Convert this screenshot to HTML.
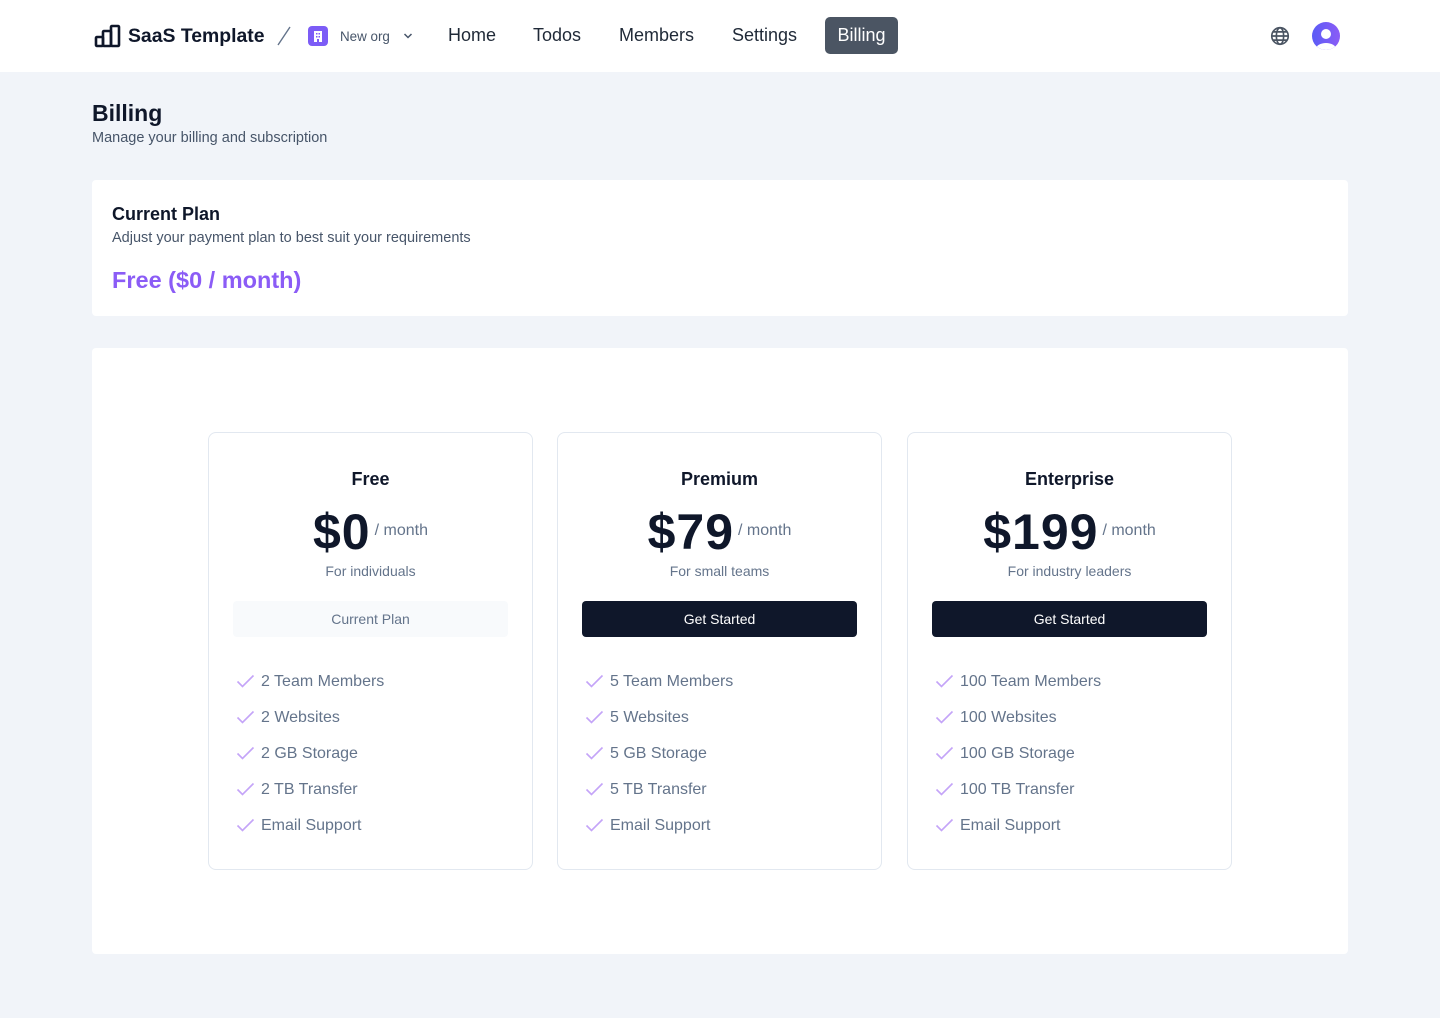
<!DOCTYPE html>
<html><head><meta charset="utf-8"><style>
*{box-sizing:border-box;margin:0;padding:0}
body{width:1440px;height:1018px;background:#f1f4f9;font-family:"Liberation Sans",sans-serif;color:#0f172a;position:relative;overflow:hidden}
.hdr{position:absolute;left:0;top:0;width:1440px;height:72px;background:#fff}
.abs{position:absolute}
.nav{position:absolute;top:25px;font-size:18px;color:#1f2937}
.bill{position:absolute;left:825px;top:17px;width:73px;height:37px;background:#4b5563;color:#fff;border-radius:5px;font-size:18px;text-align:center;line-height:37px}
.box{position:absolute;left:92px;width:1256px;background:#fff;border-radius:4px}
.card{position:absolute;top:432px;width:325px;height:438px;border:1px solid #e2e8f0;border-radius:8px;background:#fff;text-align:center}
.card h3{position:absolute;top:36px;width:100%;font-size:18px;font-weight:bold}
.price{position:absolute;top:70px;width:100%;white-space:nowrap}
.price b{font-size:50px;font-weight:bold;letter-spacing:1px}
.price span{font-size:16px;color:#64748b;vertical-align:14px;margin-left:4px}
.sub{position:absolute;top:130px;width:100%;font-size:14px;color:#64748b}
.btn{position:absolute;left:24px;right:24px;top:168px;height:36px;border-radius:4px;line-height:36px;font-size:14px}
.dark{background:#0f172a;color:#fff}
.light{background:#f8fafc;color:#64748b}
ul{position:absolute;left:27px;top:240px;list-style:none;text-align:left}
li{height:36px;font-size:16px;color:#64748b;display:flex;align-items:flex-start}
li svg{margin-right:6px;margin-top:1px}
</style></head><body>
<div class="hdr">
 <svg class="abs" style="left:94px;top:24px" width="28" height="24" viewBox="0 0 28 24" fill="none" stroke="#0f172a" stroke-width="2.6" stroke-linejoin="round"><rect x="2" y="13" width="7" height="9" rx="1"/><rect x="9" y="7" width="8" height="15" rx="1"/><rect x="17" y="2" width="8" height="20" rx="1"/></svg>
 <div class="abs" style="left:128px;top:25px;font-size:19.4px;font-weight:bold;color:#0f172a">SaaS Template</div>
 <svg class="abs" style="left:276px;top:25px" width="16" height="22"><line x1="14" y1="2" x2="2" y2="20" stroke="#64748b" stroke-width="1.4"/></svg>
 <div class="abs" style="left:308px;top:26px;width:20px;height:20px;background:#7c5cf6;border-radius:4px"><svg width="20" height="20" viewBox="0 0 20 20"><rect x="6" y="5" width="8" height="11" fill="#fff"/><rect x="8" y="7" width="1.5" height="1.5" fill="#7c5cf6"/><rect x="10.5" y="7" width="1.5" height="1.5" fill="#7c5cf6"/><rect x="8" y="10" width="1.5" height="1.5" fill="#7c5cf6"/><rect x="10.5" y="10" width="1.5" height="1.5" fill="#7c5cf6"/><rect x="9" y="13" width="2" height="3" fill="#7c5cf6"/></svg></div>
 <div class="abs" style="left:340px;top:29px;font-size:13.4px;color:#475569">New org</div>
 <svg class="abs" style="left:403px;top:32px" width="10" height="8"><path d="M1.5 2l3.5 3.5L8.5 2" stroke="#475569" stroke-width="1.5" fill="none"/></svg>
 <div class="nav" style="left:448px">Home</div>
 <div class="nav" style="left:533px">Todos</div>
 <div class="nav" style="left:619px">Members</div>
 <div class="nav" style="left:732px">Settings</div>
 <div class="bill">Billing</div>
 <svg class="abs" style="left:1269px;top:25px" width="22" height="22" viewBox="0 0 24 24" fill="none" stroke="#4b5563" stroke-width="1.8"><circle cx="12" cy="12" r="9"/><ellipse cx="12" cy="12" rx="4" ry="9"/><path d="M3 12h18M4.5 7.5h15M4.5 16.5h15"/></svg>
 <svg class="abs" style="left:1312px;top:22px" width="28" height="28" viewBox="0 0 28 28"><defs><linearGradient id="g" x1="0" x2="1"><stop offset="0" stop-color="#5b5cf6"/><stop offset="1" stop-color="#8b5cf6"/></linearGradient><clipPath id="c"><circle cx="14" cy="14" r="14"/></clipPath></defs><circle cx="14" cy="14" r="14" fill="url(#g)"/><g clip-path="url(#c)" fill="#fff"><circle cx="14" cy="12" r="5"/><ellipse cx="14" cy="27" rx="10" ry="6"/></g></svg>
</div>
<div class="abs" style="left:92px;top:100px;font-size:23px;font-weight:bold">Billing</div>
<div class="abs" style="left:92px;top:130px;font-size:14.5px;color:#475569">Manage your billing and subscription</div>
<div class="box" style="top:180px;height:136px">
 <div class="abs" style="left:20px;top:24px;font-size:18px;font-weight:bold">Current Plan</div>
 <div class="abs" style="left:20px;top:50px;font-size:14.5px;color:#475569">Adjust your payment plan to best suit your requirements</div>
 <div class="abs" style="left:20px;top:87px;font-size:23.5px;font-weight:bold;color:#8b5cf6">Free ($0 / month)</div>
</div>
<div class="box" style="top:348px;height:606px"></div>

<div class="card" style="left:208px">
 <h3>Free</h3><div class="price"><b>$0</b><span>/ month</span></div><div class="sub">For individuals</div>
 <div class="btn light">Current Plan</div>
 <ul><li><svg width="19" height="14"><path d="M1.5 7.5l5 5L17.5 1.5" stroke="#c4a4f8" stroke-width="1.6" fill="none"/></svg>2 Team Members</li><li><svg width="19" height="14"><path d="M1.5 7.5l5 5L17.5 1.5" stroke="#c4a4f8" stroke-width="1.6" fill="none"/></svg>2 Websites</li><li><svg width="19" height="14"><path d="M1.5 7.5l5 5L17.5 1.5" stroke="#c4a4f8" stroke-width="1.6" fill="none"/></svg>2 GB Storage</li><li><svg width="19" height="14"><path d="M1.5 7.5l5 5L17.5 1.5" stroke="#c4a4f8" stroke-width="1.6" fill="none"/></svg>2 TB Transfer</li><li><svg width="19" height="14"><path d="M1.5 7.5l5 5L17.5 1.5" stroke="#c4a4f8" stroke-width="1.6" fill="none"/></svg>Email Support</li></ul>
</div>
<div class="card" style="left:557px">
 <h3>Premium</h3><div class="price"><b>$79</b><span>/ month</span></div><div class="sub">For small teams</div>
 <div class="btn dark">Get Started</div>
 <ul><li><svg width="19" height="14"><path d="M1.5 7.5l5 5L17.5 1.5" stroke="#c4a4f8" stroke-width="1.6" fill="none"/></svg>5 Team Members</li><li><svg width="19" height="14"><path d="M1.5 7.5l5 5L17.5 1.5" stroke="#c4a4f8" stroke-width="1.6" fill="none"/></svg>5 Websites</li><li><svg width="19" height="14"><path d="M1.5 7.5l5 5L17.5 1.5" stroke="#c4a4f8" stroke-width="1.6" fill="none"/></svg>5 GB Storage</li><li><svg width="19" height="14"><path d="M1.5 7.5l5 5L17.5 1.5" stroke="#c4a4f8" stroke-width="1.6" fill="none"/></svg>5 TB Transfer</li><li><svg width="19" height="14"><path d="M1.5 7.5l5 5L17.5 1.5" stroke="#c4a4f8" stroke-width="1.6" fill="none"/></svg>Email Support</li></ul>
</div>
<div class="card" style="left:907px">
 <h3>Enterprise</h3><div class="price"><b>$199</b><span>/ month</span></div><div class="sub">For industry leaders</div>
 <div class="btn dark">Get Started</div>
 <ul><li><svg width="19" height="14"><path d="M1.5 7.5l5 5L17.5 1.5" stroke="#c4a4f8" stroke-width="1.6" fill="none"/></svg>100 Team Members</li><li><svg width="19" height="14"><path d="M1.5 7.5l5 5L17.5 1.5" stroke="#c4a4f8" stroke-width="1.6" fill="none"/></svg>100 Websites</li><li><svg width="19" height="14"><path d="M1.5 7.5l5 5L17.5 1.5" stroke="#c4a4f8" stroke-width="1.6" fill="none"/></svg>100 GB Storage</li><li><svg width="19" height="14"><path d="M1.5 7.5l5 5L17.5 1.5" stroke="#c4a4f8" stroke-width="1.6" fill="none"/></svg>100 TB Transfer</li><li><svg width="19" height="14"><path d="M1.5 7.5l5 5L17.5 1.5" stroke="#c4a4f8" stroke-width="1.6" fill="none"/></svg>Email Support</li></ul>
</div>
</body></html>
